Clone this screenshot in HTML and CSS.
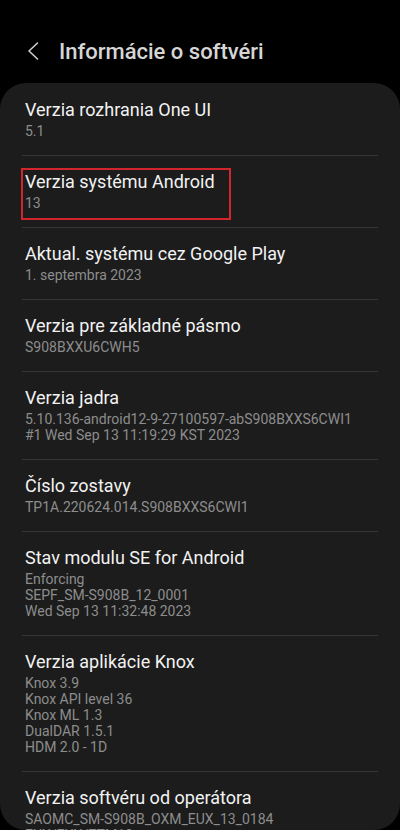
FILE: index.html
```html
<!DOCTYPE html>
<html lang="sk">
<head>
<meta charset="utf-8">
<title>Informácie o softvéri</title>
<link rel="stylesheet" href="styles.css">
</head>
<body>
<div class="screen">
  <header class="header">
    <svg class="back" width="14" height="20" viewBox="0 0 14 20" aria-hidden="true">
      <path d="M11.5 2 L3 10 L11.5 18" fill="none" stroke="#cfcfcf" stroke-width="1.6" stroke-linecap="round" stroke-linejoin="round"/>
    </svg>
    <h1 class="title">Informácie o softvéri</h1>
  </header>
  <main class="card">
    <div class="item">
      <div class="item-title">Verzia rozhrania One UI</div>
      <div class="item-sub">5.1</div>
    </div>
    <div class="item item-marked">
      <div class="item-title">Verzia systému Android</div>
      <div class="item-sub">13</div>
      <div class="highlight"></div>
    </div>
    <div class="item">
      <div class="item-title">Aktual. systému cez Google Play</div>
      <div class="item-sub">1. septembra 2023</div>
    </div>
    <div class="item">
      <div class="item-title">Verzia pre základné pásmo</div>
      <div class="item-sub">S908BXXU6CWH5</div>
    </div>
    <div class="item">
      <div class="item-title">Verzia jadra</div>
      <div class="item-sub">5.10.136-android12-9-27100597-abS908BXXS6CWI1</div>
      <div class="item-sub">#1 Wed Sep 13 11:19:29 KST 2023</div>
    </div>
    <div class="item">
      <div class="item-title">Číslo zostavy</div>
      <div class="item-sub">TP1A.220624.014.S908BXXS6CWI1</div>
    </div>
    <div class="item">
      <div class="item-title">Stav modulu SE for Android</div>
      <div class="item-sub">Enforcing</div>
      <div class="item-sub">SEPF_SM-S908B_12_0001</div>
      <div class="item-sub">Wed Sep 13 11:32:48 2023</div>
    </div>
    <div class="item">
      <div class="item-title">Verzia aplikácie Knox</div>
      <div class="item-sub">Knox 3.9</div>
      <div class="item-sub">Knox API level 36</div>
      <div class="item-sub">Knox ML 1.3</div>
      <div class="item-sub">DualDAR 1.5.1</div>
      <div class="item-sub">HDM 2.0 - 1D</div>
    </div>
    <div class="item">
      <div class="item-title">Verzia softvéru od operátora</div>
      <div class="item-sub">SAOMC_SM-S908B_OXM_EUX_13_0184</div>
      <div class="item-sub">EUX/EUX/ZTM13</div>
    </div>
  </main>
</div>
</body>
</html>
```

FILE: styles.css
```css
html, body {
  margin: 0;
  padding: 0;
  background: #000;
}

body {
  width: 400px;
  height: 830px;
  overflow: hidden;
  font-family: Roboto, "Noto Sans", "Liberation Sans", sans-serif;
}

.screen {
  height: 830px;
  display: flex;
  flex-direction: column;
}

.header {
  height: 83px;
  box-sizing: border-box;
  padding: 19px 0 0 26px;
  display: flex;
  align-items: center;
}

.back {
  display: block;
  flex: none;
}

.title {
  margin: 0 0 0 19px;
  font-size: 22px;
  font-weight: 500;
  color: #d6d6d6;
}

.card {
  flex: 1;
  min-height: 0;
  background: #1c1c1c;
  border-radius: 26px;
  overflow: hidden;
  padding-top: 1px;
}

.item {
  position: relative;
  margin: 0 22px;
  padding: 13px 3px 16px;
  border-bottom: 1px solid #363636;
}

.item-title {
  font-size: 18px;
  line-height: 26px;
  color: #f2f2f2;
}

.item-sub {
  font-size: 14px;
  line-height: 16px;
  color: #8d8d8d;
}

.highlight {
  position: absolute;
  left: -1px;
  top: 12px;
  width: 210px;
  height: 52px;
  box-sizing: border-box;
  border: 2px solid #d3262c;
}
```
